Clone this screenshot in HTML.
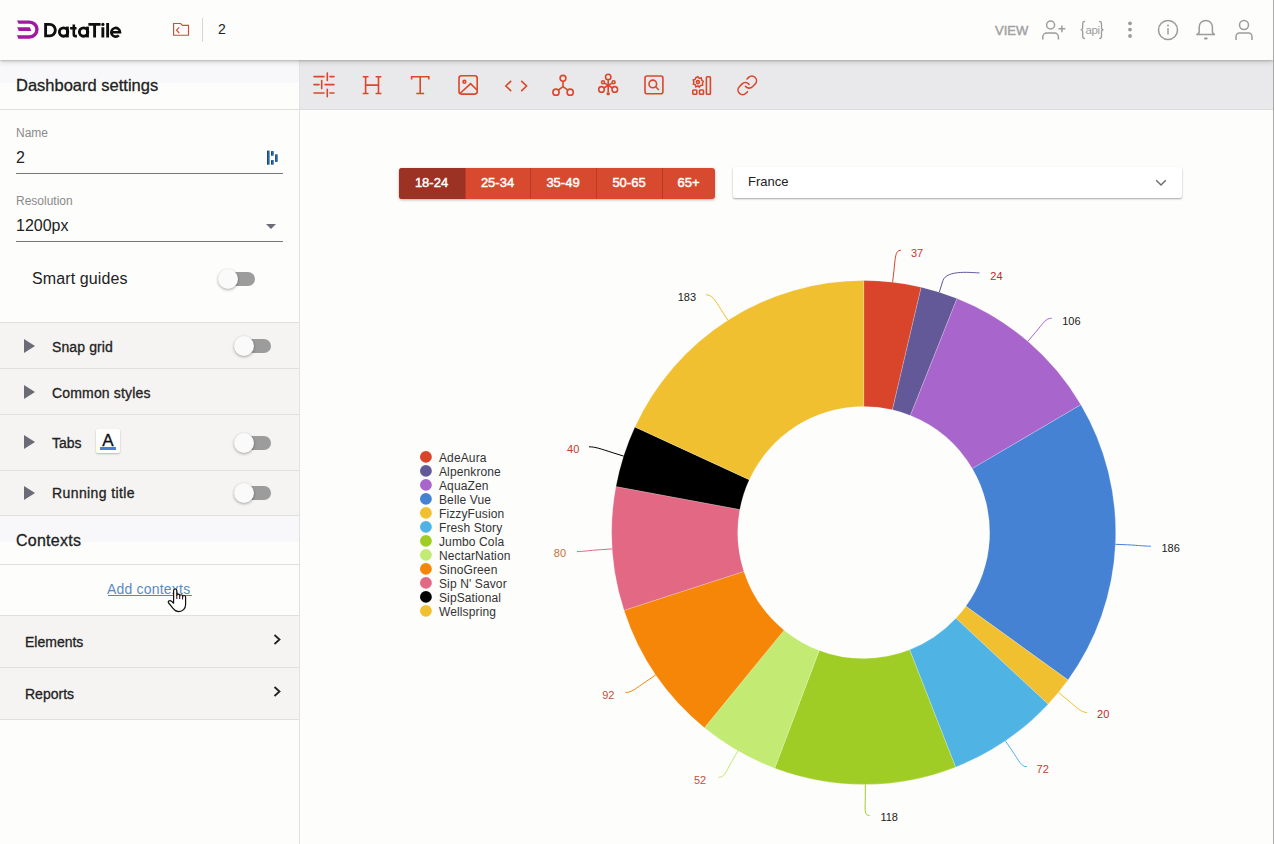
<!DOCTYPE html>
<html><head><meta charset="utf-8">
<style>
*{box-sizing:border-box}
html,body{margin:0;padding:0}
body{width:1274px;height:844px;overflow:hidden;position:relative;background:#fdfdfc;font-family:"Liberation Sans",sans-serif;color:#222}
.abs{position:absolute}
.md{-webkit-text-stroke:0.3px currentColor}
.t{position:absolute;white-space:nowrap;line-height:1}
.chart{position:absolute;left:0;top:0}
#header{position:absolute;left:0;top:0;width:1273px;height:60px;background:#fdfdfc;box-shadow:0 1px 2px rgba(0,0,0,.2),0 3px 5px rgba(0,0,0,.1);z-index:3}
#toolbar{position:absolute;left:300px;top:60px;width:973px;height:50px;background:#e9e9eb;border-bottom:1px solid #dcdcde;z-index:1}
#side{position:absolute;left:0;top:60px;width:300px;height:784px;background:#fdfdfc;border-right:1px solid #e2e2e2;z-index:2}
.sep{position:absolute;left:0;width:299px;height:1px;background:#e0e0e0}
.gray{position:absolute;left:0;width:299px;background:#f5f4f3}
.tri{position:absolute;width:0;height:0;border-top:7px solid transparent;border-bottom:7px solid transparent;border-left:11px solid #6b6b78}
.tog{position:absolute;width:34px;height:14px;border-radius:7px;background:#9c9c9c}
.tog::after{content:"";position:absolute;left:-3px;top:-3px;width:20px;height:20px;border-radius:50%;background:#fafafa;box-shadow:0 1px 3px rgba(0,0,0,.35)}
#rline{position:absolute;left:1273px;top:0;width:1px;height:844px;background:#a8a8a8;z-index:5}
.seg{position:absolute;top:0;height:31px;color:#fff;-webkit-text-stroke:0.45px #fff;font-size:13px;line-height:29px;text-align:center}
</style></head><body>
<div id="header">
  <svg class="abs" style="left:0;top:0" width="300" height="60" viewBox="0 0 300 60">
    <g fill="#a0199f">
      <path d="M17 20.4H29.5A9.15 9.15 0 0 1 29.5 38.7H18.4L17 35.3H29.5A5.75 5.75 0 0 0 29.5 23.8H18.6Z"/>
      <path d="M17.2 27.3H29.8L31.4 31.1H18.8Z"/>
    </g>
    <g fill="none" stroke="#c84f38" stroke-width="1.15">
      <path d="M173.6 35.2V23.5H180.6L182.5 25.4H188.5V35.2Z"/>
      <path d="M179.2 27.4L176.5 30.2L179.2 33"/>
    </g>
    <rect x="202" y="18" width="1" height="24" fill="#d6d6d6"/>
  </svg>
  <svg class="abs" style="left:40px;top:15px" width="90" height="30" viewBox="40 15 90 30"><g fill="none" stroke="#0e0e0e" stroke-width="2.85">
    <path d="M45.6 24.3H49.6A5.75 5.8 0 0 1 49.6 35.9H45.6Z"/>
    <circle cx="63.6" cy="32.1" r="4.2"/><path d="M67.4 26.6V37.4"/>
    <path d="M73.8 24.6V34.2Q73.8 36.1 75.7 36.1H76.9M70.1 28.3H76.5" stroke-width="2.6"/>
    <circle cx="83.6" cy="32.1" r="4.2"/><path d="M87.5 26.6V37.4"/>
    <path d="M88.4 24.3H100.6M94.6 24.3V37.4"/>
    <path d="M102.85 27.2V37.4M107.65 22.9V37.4"/>
    <path d="M111.4 32.2H120A4.35 4.35 0 1 0 118.8 35.3" stroke-width="2.6"/>
  </g><circle cx="102.9" cy="24.4" r="1.6" fill="#0e0e0e"/></svg>
  <div class="t" style="left:218px;top:22px;font-size:14px;color:#222">2</div>
  <div class="t" style="left:995px;top:24px;font-size:13px;color:#a2a2a2;-webkit-text-stroke:0.45px #a2a2a2">VIEW</div>
  <svg class="abs" style="left:1030px;top:0" width="243" height="60" viewBox="1030 0 243 60">
    <g fill="none" stroke="#9c9c9c" stroke-width="1.5">
      <circle cx="1050.6" cy="25" r="4"/>
      <path d="M1042.8 39.5V37A4 4 0 0 1 1046.8 33H1054.4A4 4 0 0 1 1058.4 37V39.5"/>
      <path d="M1058.5 28.8H1065.3M1061.9 25.4V32.2"/>
      <circle cx="1168" cy="30" r="9.5"/>
      <path d="M1168 28.3V34.5"/>
      <path d="M1196.3 34.6H1215M1196.6 34.6C1198.6 34.3 1199.2 33 1199.2 31.5V27A6.6 6.6 0 0 1 1212.4 27V31.5C1212.4 33 1213 34.3 1215 34.6"/>
      <path d="M1236 40V36.5A3.5 3.5 0 0 1 1239.5 33H1248.5A3.5 3.5 0 0 1 1252 36.5V40"/>
      <circle cx="1244" cy="25" r="4.5"/>
    </g>
    <g fill="#9c9c9c">
      <circle cx="1168" cy="25.6" r="1"/>
      <ellipse cx="1205.8" cy="38.4" rx="1.8" ry="1.2"/>
      <circle cx="1130" cy="23.3" r="1.9"/>
      <circle cx="1130" cy="29.6" r="1.9"/>
      <circle cx="1130" cy="36" r="1.9"/>
    </g>
  </svg>
  <svg class="abs" style="left:1075px;top:15px" width="35" height="30" viewBox="1075 15 35 30"><path fill="none" stroke="#9c9c9c" stroke-width="1.3" d="M1085 21.3C1083.3 21.3 1082.7 22.2 1082.7 23.8V27.8C1082.7 29.2 1082.1 29.9 1080.7 29.9C1082.1 29.9 1082.7 30.6 1082.7 32V36.2C1082.7 37.8 1083.3 38.6 1085 38.6M1099.2 21.3C1100.9 21.3 1101.5 22.2 1101.5 23.8V27.8C1101.5 29.2 1102.1 29.9 1103.5 29.9C1102.1 29.9 1101.5 30.6 1101.5 32V36.2C1101.5 37.8 1100.9 38.6 1099.2 38.6"/></svg>
  <div class="t" style="left:1085.5px;top:24.5px;font-size:11.5px;color:#9c9c9c;letter-spacing:-0.4px">api</div>
</div>
<div id="rline"></div>

<div id="side">
  <div class="abs" style="left:0;top:0;width:299px;height:23px;background:#f8f8fa"></div>
  <div class="t md" style="left:16px;top:17px;font-size:16.5px;color:#222">Dashboard settings</div>
  <div class="sep" style="top:49px"></div>
  <div class="t" style="left:16px;top:67px;font-size:12px;color:#8a8a8a">Name</div>
  <div class="t" style="left:16px;top:90px;font-size:16px;color:#222">2</div>
  <div class="abs" style="left:16px;top:113px;width:267px;height:1px;background:#777"></div>
  <div class="t" style="left:16px;top:135px;font-size:12px;color:#8a8a8a">Resolution</div>
  <div class="t" style="left:16px;top:158px;font-size:16px;color:#222">1200px</div>
  <div class="abs" style="left:16px;top:181px;width:267px;height:1px;background:#777"></div>
  <svg class="abs" style="left:266px;top:163px" width="12" height="8"><path d="M0 1H10L5 6Z" fill="#6b6b78"/></svg>
  <svg class="abs" style="left:266px;top:90px" width="14" height="16"><defs><linearGradient id="dg" x1="0" x2="1" y1="0" y2="0"><stop offset="0" stop-color="#223042"/><stop offset="0.45" stop-color="#2c5f92"/><stop offset="1" stop-color="#3f92e2"/></linearGradient></defs><g fill="url(#dg)"><rect x="1" y="0.5" width="2.8" height="14.3" rx="0.6"/><rect x="5" y="1.1" width="2.9" height="4.7" rx="0.6"/><rect x="5" y="10" width="2.9" height="4.7" rx="0.6"/><rect x="9.1" y="4.3" width="2.8" height="7.6" rx="0.6"/></g></svg>
  <div class="t" style="left:32px;top:211px;font-size:16px;color:#222;letter-spacing:0.12px">Smart guides</div>
  <div class="tog" style="left:221px;top:212px"></div>
  <div class="sep" style="top:262px"></div>

  <div class="gray" style="top:263px;height:45px"></div>
  <div class="tri" style="left:24px;top:279px"></div>
  <div class="t md" style="left:52px;top:279.5px;font-size:14px;color:#222;letter-spacing:0.12px">Snap grid</div>
  <div class="tog" style="left:237px;top:279px"></div>
  <div class="sep" style="top:308px"></div>
  <div class="gray" style="top:309px;height:45px"></div>
  <div class="tri" style="left:24px;top:325px"></div>
  <div class="t md" style="left:52px;top:325.5px;font-size:14px;color:#222;letter-spacing:0.17px">Common styles</div>
  <div class="sep" style="top:354px"></div>
  <div class="gray" style="top:355px;height:55px"></div>
  <div class="tri" style="left:24px;top:375px"></div>
  <div class="t md" style="left:52px;top:375.5px;font-size:14px;color:#222">Tabs</div>
  <div class="abs" style="left:96px;top:369px;width:24px;height:24px;background:#fff;border-radius:2px;box-shadow:0 1px 2px rgba(0,0,0,.25)"></div>
  <div class="t" style="left:102.3px;top:371.5px;font-size:17px;color:#111;-webkit-text-stroke:0.35px #111">A</div>
  <div class="abs" style="left:100px;top:387px;width:16px;height:3px;background:#4a7fd4"></div>
  <div class="tog" style="left:237px;top:376px"></div>
  <div class="sep" style="top:410px"></div>
  <div class="gray" style="top:411px;height:45px"></div>
  <div class="tri" style="left:24px;top:426px"></div>
  <div class="t md" style="left:52px;top:426px;font-size:14px;color:#222;letter-spacing:0.4px">Running title</div>
  <div class="tog" style="left:237px;top:426px"></div>
  <div class="sep" style="top:455px"></div>

  <div class="abs" style="left:0;top:456px;width:299px;height:26px;background:#f8f8fa"></div>
  <div class="t md" style="left:16px;top:473px;font-size:16px;color:#222;letter-spacing:0.25px">Contexts</div>
  <div class="sep" style="top:504px"></div>
  <div class="t" style="left:107px;top:521.5px;font-size:14px;color:#5b8ac4;letter-spacing:0.2px">Add contexts</div>
  <div class="abs" style="left:107.5px;top:535px;width:84px;height:1px;background:#5a86c0"></div>
  <div class="sep" style="top:555px"></div>
  <div class="gray" style="top:556px;height:51px"></div>
  <div class="t md" style="left:25px;top:574.5px;font-size:14px;color:#222">Elements</div>
  <svg class="abs" style="left:272px;top:574px" width="10" height="12"><path d="M2.5 1L7.5 5.5L2.5 10" fill="none" stroke="#222" stroke-width="1.8"/></svg>
  <div class="sep" style="top:607px"></div>
  <div class="gray" style="top:608px;height:51px"></div>
  <div class="t md" style="left:25px;top:627px;font-size:14px;color:#222">Reports</div>
  <svg class="abs" style="left:272px;top:626px" width="10" height="12"><path d="M2.5 1L7.5 5.5L2.5 10" fill="none" stroke="#222" stroke-width="1.8"/></svg>
  <div class="sep" style="top:659px"></div>
</div>

<div id="toolbar">
  <svg class="abs" style="left:0;top:0" width="973" height="50" viewBox="300 60 973 50">
    <g fill="none" stroke="#d8482c" stroke-width="1.6" stroke-linecap="round">
      <path d="M314 76.6H324M330 76.6H334M327.3 73V80.5M314 84.6H319M325 84.6H334M321.7 80.6V88.6M314 93H324M330 93H334M327.3 89.3V96.7"/>
    </g>
    <g fill="none" stroke="#d8482c" stroke-width="1.6">
      <path d="M365.6 76.8V93.5M378.5 76.8V93.5M362.7 76.8H368.5M375.6 76.8H381.4M362.7 93.5H368.5M375.6 93.5H381.4M365.6 85.1H378.5"/>
      <path d="M411.6 79.6V76.8H428.8V79.6M420.2 76.8V93.5M416.3 93.5H424.1"/>
      <rect x="459" y="75.8" width="18.2" height="18.3" rx="2.5"/>
      <path d="M460 93.5L470.6 83.6L477 90"/>
      <circle cx="464.4" cy="81.8" r="1.4"/>
      <path d="M511.2 80.8L505.8 86L511.2 91.1M521.2 80.8L526.6 86L521.2 91.1"/>
      <circle cx="563" cy="78.3" r="2.9"/>
      <circle cx="556" cy="92.2" r="3.1"/>
      <circle cx="570.2" cy="92.2" r="3.1"/>
      <path d="M563 81.2V86.6L558.6 89.9M563 86.6L567.6 89.9"/>
      <circle cx="608.2" cy="76.9" r="2.7"/>
      <circle cx="601.5" cy="89.4" r="2.8"/>
      <circle cx="614.8" cy="89.4" r="2.8"/>
      <circle cx="603" cy="82.2" r="1.5"/>
      <circle cx="613.6" cy="82.2" r="1.5"/>
      <path d="M608.2 79.6V92M608.2 85.3L603.8 88M608.2 85.3L612.6 88M608.2 85.3L604.3 83.1M608.2 85.3L612.3 83.1"/>
      <rect x="606.6" y="92.2" width="3.2" height="3" rx="0.8" fill="#d8482c" stroke="none"/>
      <rect x="645" y="76" width="17.9" height="17.7" rx="2"/>
      <circle cx="652.8" cy="83.9" r="3.8"/>
      <path d="M655.6 86.7L659 90"/>
      <rect x="706.4" y="76.8" width="4" height="17.4" rx="0.8"/>
      <rect x="692.8" y="90" width="4" height="4.2" rx="0.8"/>
      <rect x="699.5" y="90" width="4" height="4.2" rx="0.8"/>
      <circle cx="697.9" cy="82.1" r="1.5"/>
      <path transform="translate(736.1 74.2) scale(0.93)" stroke-width="1.72" stroke-linecap="round" stroke-linejoin="round" d="M10 13a5 5 0 0 0 7.54.54l3-3a5 5 0 0 0-7.07-7.07l-1.72 1.71M14 11a5 5 0 0 0-7.54-.54l-3 3a5 5 0 0 0 7.07 7.07l1.71-1.71"/>
    </g>
    <path fill="none" stroke="#d8482c" stroke-width="1.5" d="M697.9 76.7L699.2 78.3L701.3 77.9L701.7 80L703.3 81.4L702.4 83.1L702.7 85.2L700.6 85.5L699.2 87.1L697.9 85.9L695.9 86.9L695.3 84.9L693.3 84.1L693.9 82.1L693.2 80.1L695.1 79.5L695.9 77.5Z"/>
  </svg>
</div>

<svg class="chart" width="1274" height="844" viewBox="0 0 1274 844"><g stroke="#fff" stroke-width="0.6" stroke-opacity="0.35"><path d="M863.70 280.50A252 252 0 0 1 921.19 287.15L892.45 409.82A126 126 0 0 0 863.70 406.50Z" fill="#d8452b"/><path d="M921.19 287.15A252 252 0 0 1 957.05 298.43L910.38 415.46A126 126 0 0 0 892.45 409.82Z" fill="#635898"/><path d="M957.05 298.43A252 252 0 0 1 1080.89 404.69L972.29 468.60A126 126 0 0 0 910.38 415.46Z" fill="#a866cc"/><path d="M1080.89 404.69A252 252 0 0 1 1068.03 679.99L965.87 606.24A126 126 0 0 0 972.29 468.60Z" fill="#4682d4"/><path d="M1068.03 679.99A252 252 0 0 1 1048.15 704.20L955.92 618.35A126 126 0 0 0 965.87 606.24Z" fill="#f1c030"/><path d="M1048.15 704.20A252 252 0 0 1 955.59 767.15L909.65 649.82A126 126 0 0 0 955.92 618.35Z" fill="#4fb4e4"/><path d="M955.59 767.15A252 252 0 0 1 774.73 768.27L819.22 650.39A126 126 0 0 0 909.65 649.82Z" fill="#9fcd25"/><path d="M774.73 768.27A252 252 0 0 1 704.40 727.76L784.05 630.13A126 126 0 0 0 819.22 650.39Z" fill="#c3ea73"/><path d="M704.40 727.76A252 252 0 0 1 624.03 610.37L743.87 571.44A126 126 0 0 0 784.05 630.13Z" fill="#f58607"/><path d="M624.03 610.37A252 252 0 0 1 615.93 486.51L739.82 509.51A126 126 0 0 0 743.87 571.44Z" fill="#e36884"/><path d="M615.93 486.51A252 252 0 0 1 634.89 426.91L749.29 479.70A126 126 0 0 0 739.82 509.51Z" fill="#000000"/><path d="M634.89 426.91A252 252 0 0 1 863.70 280.50L863.70 406.50A126 126 0 0 0 749.29 479.70Z" fill="#f1c030"/></g><path d="M900.9 250.2C894.9 250.2 895.4 258.3 894.0 270.2L892.6 282.2" stroke="#d8452b" fill="none" stroke-width="1"/><path d="M979.5 272.9C973.5 272.9 946.5 269.2 942.9 280.7L939.3 292.1" stroke="#635898" fill="none" stroke-width="1"/><path d="M1051.7 318.2C1045.7 318.2 1043.4 323.0 1035.6 332.2L1027.8 341.3" stroke="#a866cc" fill="none" stroke-width="1"/><path d="M1150.8 546.2C1144.8 546.2 1139.4 545.4 1127.4 544.8L1115.4 544.3" stroke="#4682d4" fill="none" stroke-width="1"/><path d="M1087.1 712.5C1081.1 712.5 1077.0 707.6 1067.7 700.0L1058.5 692.4" stroke="#f1c030" fill="none" stroke-width="1"/><path d="M1027.0 766.7C1021.0 766.7 1018.9 760.7 1012.2 750.8L1005.4 740.9" stroke="#4fb4e4" fill="none" stroke-width="1"/><path d="M869.5 815.5C863.5 815.5 865.4 808.5 865.3 796.5L865.3 784.5" stroke="#9fcd25" fill="none" stroke-width="1"/><path d="M718.7 777.3C724.7 777.3 725.9 771.7 731.9 761.3L737.9 750.9" stroke="#c3ea73" fill="none" stroke-width="1"/><path d="M625.5 692.5C631.5 692.5 636.0 688.4 645.9 681.6L655.8 674.9" stroke="#f58607" fill="none" stroke-width="1"/><path d="M577.0 551.6C583.0 551.6 588.3 550.5 600.3 549.7L612.2 548.9" stroke="#e36884" fill="none" stroke-width="1"/><path d="M589.0 446.8C595.0 446.8 600.7 448.8 612.1 452.5L623.6 456.1" stroke="#000000" fill="none" stroke-width="1"/><path d="M706.1 294.8C712.1 294.8 714.9 300.0 721.4 310.1L727.9 320.2" stroke="#f1c030" fill="none" stroke-width="1"/><g font-family="Liberation Sans" font-size="11"><text x="911.0" y="256.8" text-anchor="start" fill="#c8392b">37</text><text x="990.3" y="279.8" text-anchor="start" fill="#c8262b">24</text><text x="1062.2" y="324.9" text-anchor="start" fill="#1a1a1a">106</text><text x="1161.4" y="552.0" text-anchor="start" fill="#1a1a1a">186</text><text x="1097.1" y="718.0" text-anchor="start" fill="#c8262b">20</text><text x="1036.6" y="772.9" text-anchor="start" fill="#b8452b">72</text><text x="880.4" y="820.9" text-anchor="start" fill="#1a1a1a">118</text><text x="706.2" y="783.9" text-anchor="end" fill="#c0503b">52</text><text x="614.5" y="698.9" text-anchor="end" fill="#c0503b">92</text><text x="566.1" y="557.2" text-anchor="end" fill="#c87038">80</text><text x="579.3" y="452.7" text-anchor="end" fill="#c8392b">40</text><text x="696.1" y="300.7" text-anchor="end" fill="#1a1a1a">183</text></g></svg>
<svg class="abs" style="left:400px;top:440px" width="140" height="190" viewBox="400 440 140 190"><circle cx="425.9" cy="456.9" r="5.9" fill="#d8452b"/><text x="439" y="461.8" font-family="Liberation Sans" font-size="12" fill="#333" letter-spacing="0.12">AdeAura</text><circle cx="425.9" cy="470.9" r="5.9" fill="#635898"/><text x="439" y="475.8" font-family="Liberation Sans" font-size="12" fill="#333" letter-spacing="0.12">Alpenkrone</text><circle cx="425.9" cy="484.9" r="5.9" fill="#a866cc"/><text x="439" y="489.8" font-family="Liberation Sans" font-size="12" fill="#333" letter-spacing="0.12">AquaZen</text><circle cx="425.9" cy="498.9" r="5.9" fill="#4682d4"/><text x="439" y="503.8" font-family="Liberation Sans" font-size="12" fill="#333" letter-spacing="0.12">Belle Vue</text><circle cx="425.9" cy="512.9" r="5.9" fill="#f1c030"/><text x="439" y="517.8" font-family="Liberation Sans" font-size="12" fill="#333" letter-spacing="0.12">FizzyFusion</text><circle cx="425.9" cy="526.9" r="5.9" fill="#4fb4e4"/><text x="439" y="531.8" font-family="Liberation Sans" font-size="12" fill="#333" letter-spacing="0.12">Fresh Story</text><circle cx="425.9" cy="540.9" r="5.9" fill="#9fcd25"/><text x="439" y="545.8" font-family="Liberation Sans" font-size="12" fill="#333" letter-spacing="0.12">Jumbo Cola</text><circle cx="425.9" cy="554.9" r="5.9" fill="#c3ea73"/><text x="439" y="559.8" font-family="Liberation Sans" font-size="12" fill="#333" letter-spacing="0.12">NectarNation</text><circle cx="425.9" cy="568.9" r="5.9" fill="#f58607"/><text x="439" y="573.8" font-family="Liberation Sans" font-size="12" fill="#333" letter-spacing="0.12">SinoGreen</text><circle cx="425.9" cy="582.9" r="5.9" fill="#e36884"/><text x="439" y="587.8" font-family="Liberation Sans" font-size="12" fill="#333" letter-spacing="0.12">Sip N' Savor</text><circle cx="425.9" cy="596.9" r="5.9" fill="#000000"/><text x="439" y="601.8" font-family="Liberation Sans" font-size="12" fill="#333" letter-spacing="0.12">SipSational</text><circle cx="425.9" cy="610.9" r="5.9" fill="#f1c030"/><text x="439" y="615.8" font-family="Liberation Sans" font-size="12" fill="#333" letter-spacing="0.12">Wellspring</text></svg>
<svg class="abs" style="left:160px;top:580px;z-index:4" width="35" height="40" viewBox="160 580 35 40"><path d="M173.6 600.5V590.6A1.6 1.6 0 0 1 176.8 590.6V595.5A1.45 1.45 0 0 1 179.7 595.5V596.2A1.45 1.45 0 0 1 182.6 596.2V597A1.45 1.45 0 0 1 185.6 597V604.5C185.6 608.8 182.5 611.6 178.8 611.6C176 611.6 174.6 610.3 173 608.3L168.6 603C168 602.2 168.2 601.3 169 600.9C169.9 600.4 170.9 600.6 171.6 601.3L173.6 603.2Z" fill="#fff" stroke="#111" stroke-width="1.2" stroke-linejoin="round"/><path d="M176.8 595.5V599M179.7 596.2V599M182.6 597V599.5" stroke="#111" stroke-width="1" fill="none"/></svg>

<div class="abs" style="left:399px;top:168px;width:316px;height:31px;text-indent:-1px;line-height:30px;border-radius:3px;overflow:hidden;box-shadow:0 1px 3px rgba(0,0,0,.3);background:#d84a2f">
  <div class="seg" style="left:0;width:66px;background:#9b3224">18-24</div>
  <div class="seg" style="left:66px;width:65px;border-left:1px solid #b83a27">25-34</div>
  <div class="seg" style="left:131px;width:66px;border-left:1px solid #b83a27">35-49</div>
  <div class="seg" style="left:197px;width:66px;border-left:1px solid #b83a27">50-65</div>
  <div class="seg" style="left:263px;width:53px;border-left:1px solid #b83a27">65+</div>
</div>
<div class="abs" style="left:733px;top:167px;width:449px;height:31px;background:#fff;border-radius:2px;box-shadow:0 1px 2px rgba(0,0,0,.35)"></div>
<div class="t" style="left:748px;top:175px;font-size:13px;color:#222">France</div>
<svg class="abs" style="left:1154px;top:177.5px" width="14" height="10"><path d="M2.2 2.2L7 7L11.8 2.2" fill="none" stroke="#6e6e6e" stroke-width="1.5"/></svg>
</body></html>
